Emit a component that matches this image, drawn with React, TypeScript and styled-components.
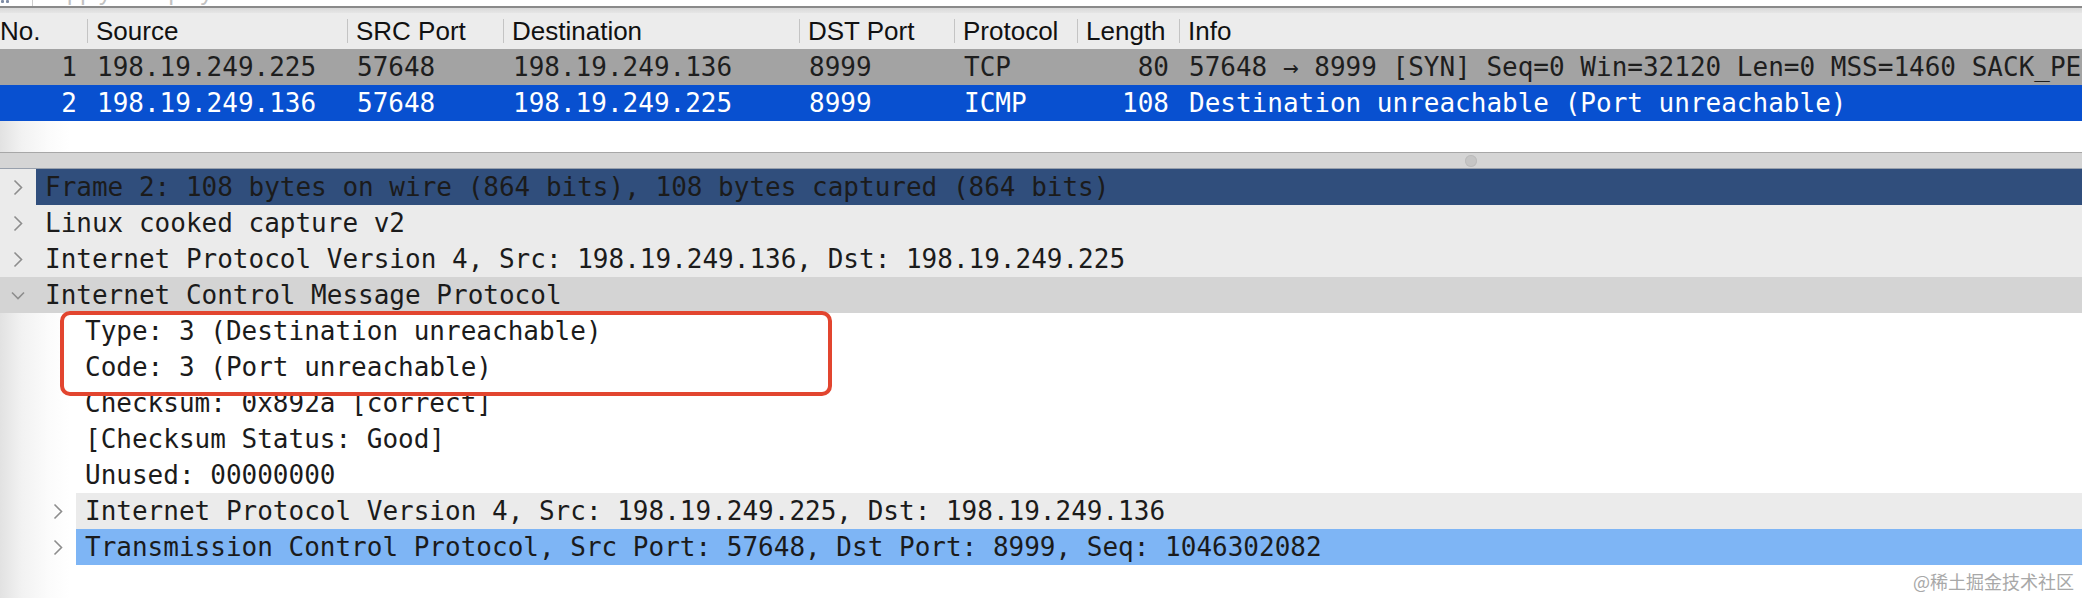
import React from 'react';
import styled, { createGlobalStyle } from 'styled-components';

const MONO = `"DejaVu Sans Mono", "Liberation Mono", monospace`;
const SANS = `"Liberation Sans", Arial, sans-serif`;
const COLS = '87px 260px 156px 296px 155px 123px 102px 1fr';

const GlobalStyle = createGlobalStyle`
  html, body { margin: 0; padding: 0; background: #fff; overflow: hidden; }
  #root { width: 2082px; height: 598px; }
`;

const Page = styled.div`
  position: relative;
  width: 2082px;
  height: 598px;
  display: flex;
  flex-direction: column;
  overflow: hidden;
  background: linear-gradient(to right, #e2e2e2 0px, #f2f2f2 22px, #fbfbfb 48px, #ffffff 70px);
`;

/* ---------- top: packet list ---------- */
const PacketPane = styled.div`
  height: 152px;
  flex-shrink: 0;
  display: flex;
  flex-direction: column;
`;

const FilterBar = styled.div`
  height: 6px;
  display: flex;
  align-items: flex-end;
  overflow: hidden;
  background: #fff;
  flex-shrink: 0;
`;

const BookmarkSlot = styled.div`
  width: 33px;
  height: 6px;
  box-sizing: border-box;
  border-right: 1px solid #cdcdcd;
  display: flex;
  align-items: flex-start;
  padding-left: 1px;
`;

const FilterPlaceholder = styled.div`
  font-family: ${SANS};
  font-size: 24px;
  line-height: 28px;
  color: #c2c2c2;
  padding-left: 18px;
  white-space: nowrap;
`;

const FilterEdge = styled.div`
  height: 2px;
  background: #8a8a8a;
  flex-shrink: 0;
`;

const HeaderShade = styled.div`
  height: 5px;
  background: linear-gradient(#d9d9d9, #e6e6e6);
  flex-shrink: 0;
`;

const HeaderRow = styled.div`
  display: grid;
  grid-template-columns: ${COLS};
  height: 36px;
  align-items: center;
  background: #ececec;
  flex-shrink: 0;
`;

const HeaderCell = styled.div<{ $first?: boolean }>`
  height: 24px;
  line-height: 24px;
  font-family: ${SANS};
  font-size: 26px;
  color: #111;
  white-space: nowrap;
  box-sizing: border-box;
  padding-left: ${(p) => (p.$first ? '0' : '8px')};
  border-left: ${(p) => (p.$first ? 'none' : '1px solid #c4c4c4')};
`;

const PacketRow = styled.div<{ $bg: string; $fg: string }>`
  display: grid;
  grid-template-columns: ${COLS};
  height: 36px;
  background: ${(p) => p.$bg};
  color: ${(p) => p.$fg};
  flex-shrink: 0;
`;

const PacketCell = styled.div<{ $right?: boolean }>`
  font-family: ${MONO};
  font-size: 26px;
  line-height: 36px;
  white-space: pre;
  overflow: hidden;
  box-sizing: border-box;
  padding: 0 10px;
  text-align: ${(p) => (p.$right ? 'right' : 'left')};
`;

/* ---------- splitter ---------- */
const Splitter = styled.div`
  height: 17px;
  flex-shrink: 0;
  box-sizing: border-box;
  border-top: 1px solid #a7a7a7;
  border-bottom: 1px solid #98a0ac;
  background: #d5d5d5;
  display: flex;
  align-items: center;
  padding-left: 1465px;
`;

const Grip = styled.div`
  width: 12px;
  height: 12px;
  border-radius: 50%;
  background: #c5c5c5;
  box-shadow: inset 0 0 0 1px #bcbcbc;
`;

/* ---------- bottom: detail tree ---------- */
const DetailPane = styled.div`
  position: relative;
  flex: 1;
  display: flex;
  flex-direction: column;
`;

const TreeRow = styled.div<{ $bg?: string }>`
  display: flex;
  height: 36px;
  flex-shrink: 0;
  background: ${(p) => p.$bg || 'transparent'};
`;

const Gutter = styled.div<{ $level: number }>`
  width: ${(p) => 36 + p.$level * 40}px;
  flex-shrink: 0;
  display: flex;
  justify-content: flex-end;
`;

const Expander = styled.div`
  width: 36px;
  display: flex;
  align-items: center;
  justify-content: center;
`;

const Label = styled.div<{ $bg?: string }>`
  flex: 1;
  min-width: 0;
  background: ${(p) => p.$bg || 'transparent'};
  font-family: ${MONO};
  font-size: 26px;
  line-height: 36px;
  color: #1b1b1b;
  white-space: pre;
  overflow: hidden;
  padding-left: 9px;
`;

const Callout = styled.div`
  position: absolute;
  left: 60px;
  top: 142px;
  width: 772px;
  height: 85px;
  box-sizing: border-box;
  border: 4px solid #e2452f;
  border-radius: 10px;
  pointer-events: none;
`;

const Watermark = styled.div`
  position: absolute;
  right: 8px;
  bottom: 7px;
  font-family: "Noto Sans CJK SC", "Noto Sans", sans-serif;
  font-size: 18px;
  line-height: 20px;
  color: #a8a8a8;
  white-space: nowrap;
`;

const ChevronRight = () => (
  <svg width="10" height="17" viewBox="0 0 10 17">
    <polyline points="1.5,1.5 8.5,8.5 1.5,15.5" fill="none" stroke="#8d8d8d" strokeWidth="1.6" />
  </svg>
);

const ChevronDown = () => (
  <svg width="14" height="9" viewBox="0 0 14 9">
    <polyline points="1,1.5 7,7.5 13,1.5" fill="none" stroke="#8d8d8d" strokeWidth="1.6" />
  </svg>
);

type Packet = string[];
const headers = ['No.', 'Source', 'SRC Port', 'Destination', 'DST Port', 'Protocol', 'Length', 'Info'];
const packets: { cells: Packet; bg: string; fg: string }[] = [
  {
    cells: ['1', '198.19.249.225', '57648', '198.19.249.136', '8999', 'TCP', '80',
      '57648 → 8999 [SYN] Seq=0 Win=32120 Len=0 MSS=1460 SACK_PERM=1 TSval=2914437316 TSecr=0 WS=128'],
    bg: '#a3a3a3',
    fg: '#1e1e1e',
  },
  {
    cells: ['2', '198.19.249.136', '57648', '198.19.249.225', '8999', 'ICMP', '108',
      'Destination unreachable (Port unreachable)'],
    bg: '#0850d0',
    fg: '#ffffff',
  },
];

type Node = {
  level: number;
  state: 'collapsed' | 'expanded' | 'leaf';
  text: string;
  rowBg?: string;
  labelBg?: string;
};

const tree: Node[] = [
  { level: 0, state: 'collapsed', text: 'Frame 2: 108 bytes on wire (864 bits), 108 bytes captured (864 bits)', rowBg: '#ebebeb', labelBg: '#304e7c' },
  { level: 0, state: 'collapsed', text: 'Linux cooked capture v2', rowBg: '#ebebeb' },
  { level: 0, state: 'collapsed', text: 'Internet Protocol Version 4, Src: 198.19.249.136, Dst: 198.19.249.225', rowBg: '#ebebeb' },
  { level: 0, state: 'expanded', text: 'Internet Control Message Protocol', rowBg: '#d4d4d4' },
  { level: 1, state: 'leaf', text: 'Type: 3 (Destination unreachable)' },
  { level: 1, state: 'leaf', text: 'Code: 3 (Port unreachable)' },
  { level: 1, state: 'leaf', text: 'Checksum: 0x892a [correct]' },
  { level: 1, state: 'leaf', text: '[Checksum Status: Good]' },
  { level: 1, state: 'leaf', text: 'Unused: 00000000' },
  { level: 1, state: 'collapsed', text: 'Internet Protocol Version 4, Src: 198.19.249.225, Dst: 198.19.249.136', labelBg: '#ebebeb' },
  { level: 1, state: 'collapsed', text: 'Transmission Control Protocol, Src Port: 57648, Dst Port: 8999, Seq: 1046302082', labelBg: '#7eb5f5' },
];

export default function App() {
  return (
    <>
      <GlobalStyle />
      <Page>
        <PacketPane>
          <FilterBar>
            <BookmarkSlot>
              <svg width="9" height="4" viewBox="0 0 9 4">
                <rect x="0" y="0" width="3" height="3" rx="1" fill="#7f8da6" />
                <rect x="5" y="0" width="3" height="3" rx="1" fill="#7f8da6" />
              </svg>
            </BookmarkSlot>
            <FilterPlaceholder>Apply a display filter … &lt;⌘/&gt;</FilterPlaceholder>
          </FilterBar>
          <FilterEdge />
          <HeaderShade />
          <HeaderRow>
            {headers.map((h, i) => (
              <HeaderCell key={h} $first={i === 0}>{h}</HeaderCell>
            ))}
          </HeaderRow>
          {packets.map((p, r) => (
            <PacketRow key={r} $bg={p.bg} $fg={p.fg}>
              {p.cells.map((c, i) => (
                <PacketCell key={i} $right={i === 0 || i === 6}>{c}</PacketCell>
              ))}
            </PacketRow>
          ))}
        </PacketPane>
        <Splitter>
          <Grip />
        </Splitter>
        <DetailPane>
          {tree.map((n, i) => (
            <TreeRow key={i} $bg={n.rowBg}>
              <Gutter $level={n.level}>
                <Expander>
                  {n.state === 'collapsed' && <ChevronRight />}
                  {n.state === 'expanded' && <ChevronDown />}
                </Expander>
              </Gutter>
              <Label $bg={n.labelBg}>{n.text}</Label>
            </TreeRow>
          ))}
          <Callout />
        </DetailPane>
        <Watermark>@稀土掘金技术社区</Watermark>
      </Page>
    </>
  );
}
